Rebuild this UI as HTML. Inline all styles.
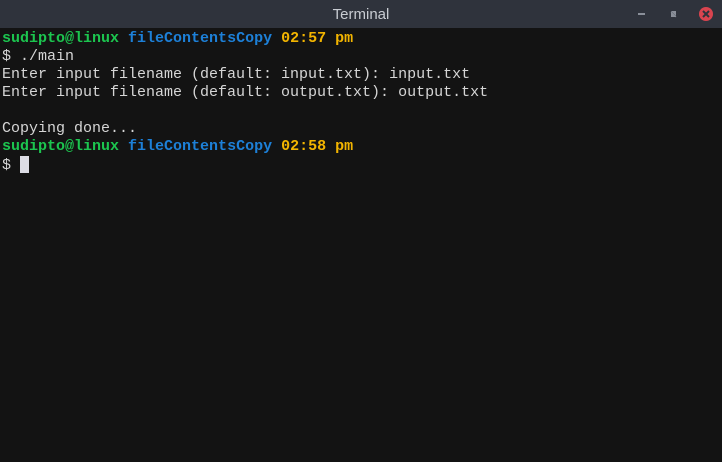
<!DOCTYPE html>
<html><head><meta charset="utf-8"><style>
html,body{margin:0;padding:0;width:722px;height:462px;overflow:hidden;background:#131313}
.tb{position:absolute;left:0;top:0;width:722px;height:28px;background:#2f333c;color:#c8ccd2;font:15px "Liberation Sans",sans-serif;text-align:center;line-height:29px}
.term{position:absolute;left:2px;top:30px;font:15px/18px "Liberation Mono",monospace;color:#d6d6d6;white-space:pre}
.g{color:#1cc54f;font-weight:bold}.b{color:#1d80d8;font-weight:bold}.y{color:#f2b400;font-weight:bold}
.cur{display:inline-block;width:9px;height:17px;background:#dcdce4;vertical-align:-4px}
</style></head><body>
<div class="tb">Terminal
<svg style="position:absolute;left:0;top:0" width="722" height="28">
<rect x="638" y="13" width="7" height="2" fill="#8a8f99"/>
<path d="M671 11 h5 v5 z M676 17 h-5 v-5 z" fill="#8a8f99"/>
<path d="M671 12 L676 17" stroke="#8a8f99" stroke-width="1"/>
<circle cx="706" cy="14" r="7" fill="#d9444f"/>
<path d="M703 11 L709 17 M709 11 L703 17" stroke="#2f333c" stroke-width="2"/>
</svg></div>
<div class="term"><span class="g">sudipto@linux</span> <span class="b">fileContentsCopy</span> <span class="y">02:57 pm</span>
$ ./main
Enter input filename (default: input.txt): input.txt
Enter input filename (default: output.txt): output.txt

Copying done...
<span class="g">sudipto@linux</span> <span class="b">fileContentsCopy</span> <span class="y">02:58 pm</span>
$ <span class="cur"></span></div>
</body></html>
